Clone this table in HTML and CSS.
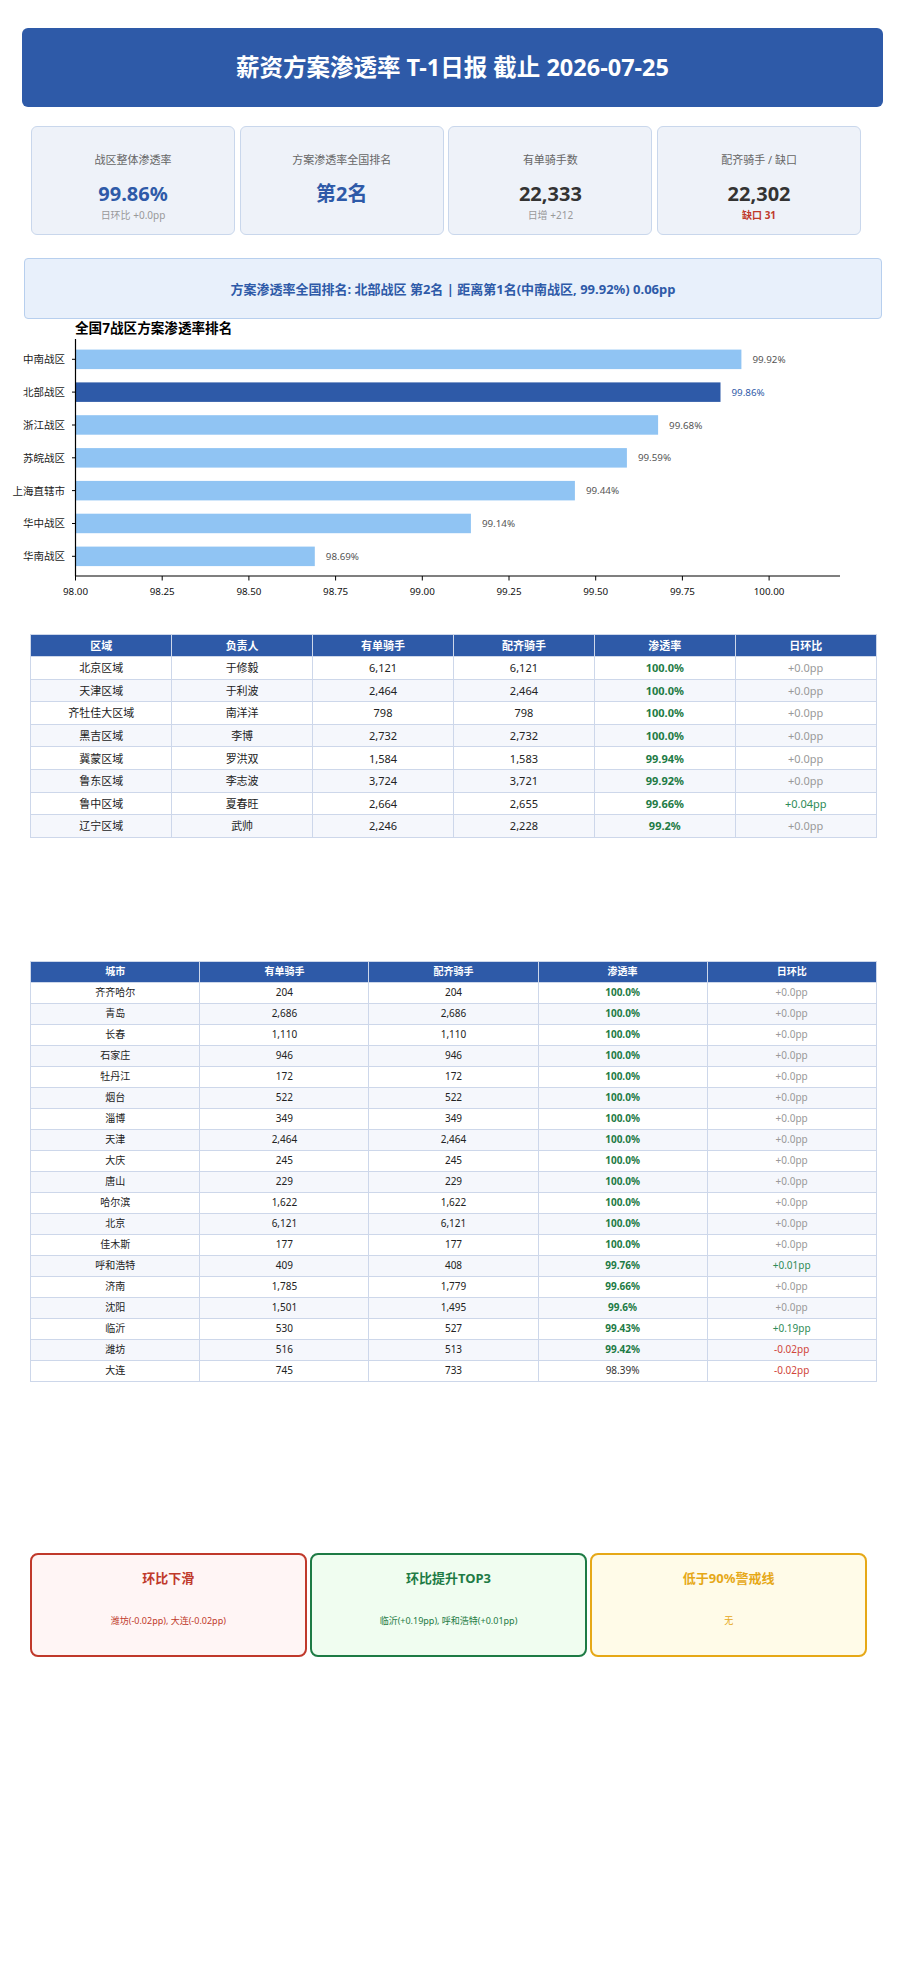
FILE: index.html
```html
<!DOCTYPE html>
<html lang="zh-CN">
<head>
<meta charset="utf-8">
<title>薪资方案渗透率 T-1日报</title>
<link rel="stylesheet" href="styles.css">
</head>
<body>
<div class="page">
  <header class="header"><h1>薪资方案渗透率 T-1日报 截止 2026-07-25</h1></header>

  <section class="cards">
    <div class="card">
      <div class="card-label">战区整体渗透率</div>
      <div class="card-value blue">99.86%</div>
      <div class="card-sub">日环比 +0.0pp</div>
    </div>
    <div class="card">
      <div class="card-label">方案渗透率全国排名</div>
      <div class="card-value blue">第2名</div>
    </div>
    <div class="card">
      <div class="card-label">有单骑手数</div>
      <div class="card-value">22,333</div>
      <div class="card-sub">日增 +212</div>
    </div>
    <div class="card">
      <div class="card-label">配齐骑手 / 缺口</div>
      <div class="card-value">22,302</div>
      <div class="card-sub red-strong">缺口 31</div>
    </div>
  </section>

  <section class="info">方案渗透率全国排名: 北部战区 第2名 | 距离第1名(中南战区, 99.92%) 0.06pp</section>

  <svg class="chart" width="860" height="285" viewBox="0 319 860 285" xmlns="http://www.w3.org/2000/svg">
    <text class="c-title" x="75" y="333">全国7战区方案渗透率排名</text>
    <!-- bars -->
    <rect class="bar" x="75.5" y="349.6" width="665.9" height="19.5"/>
    <rect class="bar hi" x="75.5" y="382.4" width="645.0" height="19.5"/>
    <rect class="bar" x="75.5" y="415.2" width="582.6" height="19.5"/>
    <rect class="bar" x="75.5" y="448.1" width="551.4" height="19.5"/>
    <rect class="bar" x="75.5" y="480.9" width="499.4" height="19.5"/>
    <rect class="bar" x="75.5" y="513.7" width="395.4" height="19.5"/>
    <rect class="bar" x="75.5" y="546.6" width="239.3" height="19.5"/>
    <!-- value labels -->
    <text class="val" x="752.4" y="362.8">99.92%</text>
    <text class="val hi" x="731.5" y="395.6">99.86%</text>
    <text class="val" x="669.1" y="428.5">99.68%</text>
    <text class="val" x="637.9" y="461.3">99.59%</text>
    <text class="val" x="585.9" y="494.1">99.44%</text>
    <text class="val" x="481.9" y="527.0">99.14%</text>
    <text class="val" x="325.8" y="559.8">98.69%</text>
    <!-- y labels -->
    <text class="ylab" x="65" y="363.2">中南战区</text>
    <text class="ylab" x="65" y="396.0">北部战区</text>
    <text class="ylab" x="65" y="428.9">浙江战区</text>
    <text class="ylab" x="65" y="461.7">苏皖战区</text>
    <text class="ylab" x="65" y="494.5">上海直辖市</text>
    <text class="ylab" x="65" y="527.4">华中战区</text>
    <text class="ylab" x="65" y="560.2">华南战区</text>
    <g class="tick">
      <line x1="72" y1="359.3" x2="75.5" y2="359.3"/>
      <line x1="72" y1="392.1" x2="75.5" y2="392.1"/>
      <line x1="72" y1="425.0" x2="75.5" y2="425.0"/>
      <line x1="72" y1="457.8" x2="75.5" y2="457.8"/>
      <line x1="72" y1="490.6" x2="75.5" y2="490.6"/>
      <line x1="72" y1="523.5" x2="75.5" y2="523.5"/>
      <line x1="72" y1="556.3" x2="75.5" y2="556.3"/>
      <line x1="75.5" y1="576" x2="75.5" y2="580.5"/>
      <line x1="162.2" y1="576" x2="162.2" y2="580.5"/>
      <line x1="248.9" y1="576" x2="248.9" y2="580.5"/>
      <line x1="335.6" y1="576" x2="335.6" y2="580.5"/>
      <line x1="422.3" y1="576" x2="422.3" y2="580.5"/>
      <line x1="509.0" y1="576" x2="509.0" y2="580.5"/>
      <line x1="595.7" y1="576" x2="595.7" y2="580.5"/>
      <line x1="682.4" y1="576" x2="682.4" y2="580.5"/>
      <line x1="769.1" y1="576" x2="769.1" y2="580.5"/>
    </g>
    <line class="axis" x1="75.5" y1="339" x2="75.5" y2="576"/>
    <line class="axis" x1="75" y1="576" x2="840" y2="576"/>
    <text class="xlab" x="75.5" y="594.5">98.00</text>
    <text class="xlab" x="162.2" y="594.5">98.25</text>
    <text class="xlab" x="248.9" y="594.5">98.50</text>
    <text class="xlab" x="335.6" y="594.5">98.75</text>
    <text class="xlab" x="422.3" y="594.5">99.00</text>
    <text class="xlab" x="509.0" y="594.5">99.25</text>
    <text class="xlab" x="595.7" y="594.5">99.50</text>
    <text class="xlab" x="682.4" y="594.5">99.75</text>
    <text class="xlab" x="769.1" y="594.5">100.00</text>
  </svg>

  <table class="tbl tbl-region">
    <thead>
      <tr><th>区域</th><th>负责人</th><th>有单骑手</th><th>配齐骑手</th><th>渗透率</th><th>日环比</th></tr>
    </thead>
    <tbody>
      <tr><td>北京区域</td><td>于修毅</td><td>6,121</td><td>6,121</td><td class="rate">100.0%</td><td class="chg">+0.0pp</td></tr>
      <tr><td>天津区域</td><td>于利波</td><td>2,464</td><td>2,464</td><td class="rate">100.0%</td><td class="chg">+0.0pp</td></tr>
      <tr><td>齐牡佳大区域</td><td>南洋洋</td><td>798</td><td>798</td><td class="rate">100.0%</td><td class="chg">+0.0pp</td></tr>
      <tr><td>黑吉区域</td><td>李博</td><td>2,732</td><td>2,732</td><td class="rate">100.0%</td><td class="chg">+0.0pp</td></tr>
      <tr><td>冀蒙区域</td><td>罗洪双</td><td>1,584</td><td>1,583</td><td class="rate">99.94%</td><td class="chg">+0.0pp</td></tr>
      <tr><td>鲁东区域</td><td>李志波</td><td>3,724</td><td>3,721</td><td class="rate">99.92%</td><td class="chg">+0.0pp</td></tr>
      <tr><td>鲁中区域</td><td>夏春旺</td><td>2,664</td><td>2,655</td><td class="rate">99.66%</td><td class="chg up">+0.04pp</td></tr>
      <tr><td>辽宁区域</td><td>武帅</td><td>2,246</td><td>2,228</td><td class="rate">99.2%</td><td class="chg">+0.0pp</td></tr>
    </tbody>
  </table>

  <table class="tbl tbl-city">
    <thead>
      <tr><th>城市</th><th>有单骑手</th><th>配齐骑手</th><th>渗透率</th><th>日环比</th></tr>
    </thead>
    <tbody>
      <tr><td>齐齐哈尔</td><td>204</td><td>204</td><td class="rate">100.0%</td><td class="chg">+0.0pp</td></tr>
      <tr><td>青岛</td><td>2,686</td><td>2,686</td><td class="rate">100.0%</td><td class="chg">+0.0pp</td></tr>
      <tr><td>长春</td><td>1,110</td><td>1,110</td><td class="rate">100.0%</td><td class="chg">+0.0pp</td></tr>
      <tr><td>石家庄</td><td>946</td><td>946</td><td class="rate">100.0%</td><td class="chg">+0.0pp</td></tr>
      <tr><td>牡丹江</td><td>172</td><td>172</td><td class="rate">100.0%</td><td class="chg">+0.0pp</td></tr>
      <tr><td>烟台</td><td>522</td><td>522</td><td class="rate">100.0%</td><td class="chg">+0.0pp</td></tr>
      <tr><td>淄博</td><td>349</td><td>349</td><td class="rate">100.0%</td><td class="chg">+0.0pp</td></tr>
      <tr><td>天津</td><td>2,464</td><td>2,464</td><td class="rate">100.0%</td><td class="chg">+0.0pp</td></tr>
      <tr><td>大庆</td><td>245</td><td>245</td><td class="rate">100.0%</td><td class="chg">+0.0pp</td></tr>
      <tr><td>唐山</td><td>229</td><td>229</td><td class="rate">100.0%</td><td class="chg">+0.0pp</td></tr>
      <tr><td>哈尔滨</td><td>1,622</td><td>1,622</td><td class="rate">100.0%</td><td class="chg">+0.0pp</td></tr>
      <tr><td>北京</td><td>6,121</td><td>6,121</td><td class="rate">100.0%</td><td class="chg">+0.0pp</td></tr>
      <tr><td>佳木斯</td><td>177</td><td>177</td><td class="rate">100.0%</td><td class="chg">+0.0pp</td></tr>
      <tr><td>呼和浩特</td><td>409</td><td>408</td><td class="rate">99.76%</td><td class="chg up">+0.01pp</td></tr>
      <tr><td>济南</td><td>1,785</td><td>1,779</td><td class="rate">99.66%</td><td class="chg">+0.0pp</td></tr>
      <tr><td>沈阳</td><td>1,501</td><td>1,495</td><td class="rate">99.6%</td><td class="chg">+0.0pp</td></tr>
      <tr><td>临沂</td><td>530</td><td>527</td><td class="rate">99.43%</td><td class="chg up">+0.19pp</td></tr>
      <tr><td>潍坊</td><td>516</td><td>513</td><td class="rate">99.42%</td><td class="chg down">-0.02pp</td></tr>
      <tr><td>大连</td><td>745</td><td>733</td><td class="rate plain">98.39%</td><td class="chg down">-0.02pp</td></tr>
    </tbody>
  </table>

  <section class="alerts">
    <div class="alert alert-red">
      <div class="alert-title">环比下滑</div>
      <div class="alert-body">潍坊(-0.02pp), 大连(-0.02pp)</div>
    </div>
    <div class="alert alert-green">
      <div class="alert-title">环比提升TOP3</div>
      <div class="alert-body">临沂(+0.19pp), 呼和浩特(+0.01pp)</div>
    </div>
    <div class="alert alert-yellow">
      <div class="alert-title">低于90%警戒线</div>
      <div class="alert-body">无</div>
    </div>
  </section>
</div>
</body>
</html>
```

FILE: styles.css
```css
* { box-sizing: border-box; }

html, body {
  margin: 0;
  padding: 0;
  background: #ffffff;
}

body {
  font-family: "Noto Sans", "Noto Sans CJK SC", sans-serif;
  color: #222222;
}

.page {
  padding: 28px 0 60px;
  width: 905px;
}

/* header */
.header {
  margin: 0 22px;
  height: 79px;
  background: #2e5aa8;
  border-radius: 6px;
  display: flex;
  align-items: center;
  justify-content: center;
}

.header h1 {
  margin: 0;
  color: #ffffff;
  font-size: 23.5px;
  font-weight: 700;
  line-height: 1;
}

/* KPI cards */
.cards {
  display: flex;
  gap: 4.7px;
  margin: 19.3px 0 0 31px;
}

.card {
  width: 204px;
  height: 108.4px;
  background: #eef2f9;
  border: 1px solid #c9d7ec;
  border-radius: 6px;
  padding-top: 24.7px;
  text-align: center;
}

.card-label {
  font-size: 11px;
  line-height: 16px;
  color: #666666;
}

.card-value {
  margin-top: 14px;
  font-size: 20px;
  line-height: 24px;
  font-weight: 700;
  color: #333333;
}

.card-value.blue { color: #2e5aa8; }

.card-sub {
  margin-top: 2px;
  font-size: 10px;
  line-height: 14px;
  color: #999999;
}

.card-sub.red-strong {
  color: #c0392b;
  font-weight: 700;
}

/* info banner */
.info {
  margin: 23.3px 23px 0 24px;
  height: 61.3px;
  background: #e8f0fb;
  border: 1px solid #b7cfee;
  border-radius: 4px;
  display: flex;
  align-items: center;
  justify-content: center;
  color: #2e5aa8;
  font-size: 13px;
  font-weight: 700;
}

/* chart */
.chart {
  display: block;
}

.chart text {
  font-family: "Noto Sans", "Noto Sans CJK SC", sans-serif;
}

.c-title {
  font-size: 13.6px;
  font-weight: 700;
  fill: #000000;
}

.bar { fill: #90c4f3; }
.bar.hi { fill: #2e5aa8; }

.val {
  font-size: 9.8px;
  fill: #555555;
}
.val.hi { fill: #2e5aa8; }

.ylab {
  font-size: 10.5px;
  fill: #222222;
  text-anchor: end;
}

.xlab {
  font-size: 9.8px;
  fill: #111111;
  text-anchor: middle;
}

.tick line {
  stroke: #000000;
  stroke-width: 1;
}

.axis {
  stroke: #000000;
  stroke-width: 1.2;
}

/* tables */
.tbl {
  border-collapse: collapse;
  margin-left: 30.3px;
  width: 846.4px;
  table-layout: fixed;
  text-align: center;
}

.tbl th,
.tbl td {
  border: 1px solid #cdd7ea;
  padding: 0;
}

.tbl th {
  background: #2e5aa8;
  color: #ffffff;
  font-weight: 700;
}

.tbl tbody tr:nth-child(even) td {
  background: #f5f7fc;
}

.tbl td { color: #222222; }

.tbl td.rate {
  color: #1e7b45;
  font-weight: 700;
}

.tbl td.rate.plain {
  color: #333333;
  font-weight: 400;
}

.tbl td.chg { color: #999999; }
.tbl td.chg.up { color: #2e8b57; }
.tbl td.chg.down { color: #d0453a; }

.tbl-region {
  margin-top: 30px;
  font-size: 11px;
}

.tbl-region th { height: 21.7px; line-height: 20px; }
.tbl-region td { height: 22.6px; line-height: 21px; }

.tbl-city {
  margin-top: 123px;
  font-size: 10px;
}

.tbl-city th { height: 21px; line-height: 19px; }
.tbl-city td { height: 21px; line-height: 19px; }

/* alerts */
.alerts {
  display: flex;
  gap: 3.6px;
  margin: 171px 0 0 30px;
}

.alert {
  width: 276.6px;
  height: 104px;
  border: 2px solid;
  border-radius: 8px;
  padding-top: 14px;
  text-align: center;
}

.alert-title {
  font-size: 13px;
  line-height: 18px;
  font-weight: 700;
}

.alert-body {
  margin-top: 28px;
  font-size: 9px;
  line-height: 12px;
}

.alert-red {
  border-color: #c0392b;
  background: #fff5f5;
  color: #c0392b;
}

.alert-green {
  border-color: #1e7b45;
  background: #f0fdf0;
  color: #1e7b45;
}

.alert-yellow {
  border-color: #e6a817;
  background: #fffbe8;
  color: #e6a817;
}
```
